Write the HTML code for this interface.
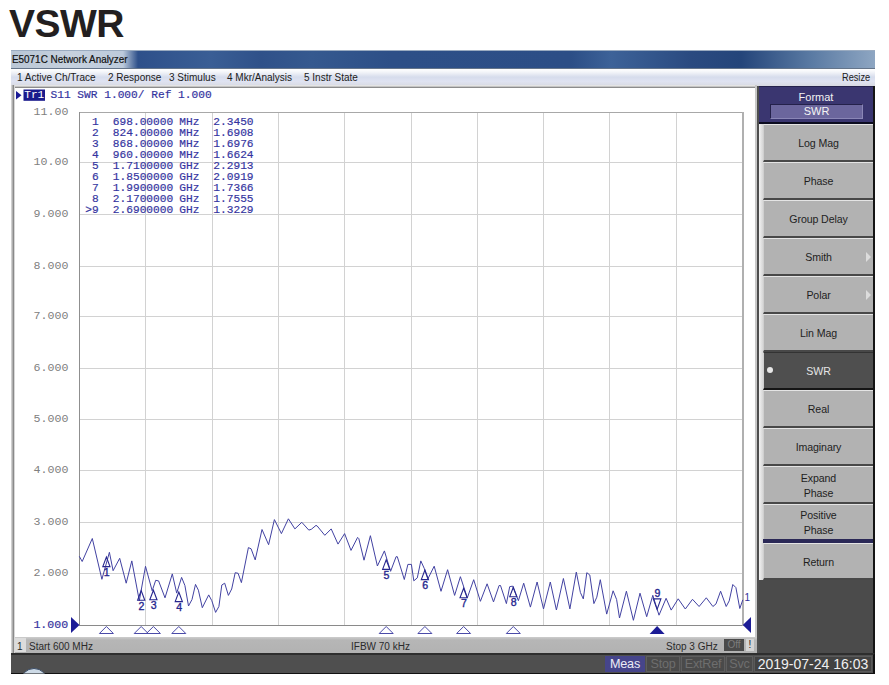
<!DOCTYPE html>
<html><head><meta charset="utf-8">
<style>
*{margin:0;padding:0;box-sizing:border-box}
html,body{width:889px;height:685px;overflow:hidden;background:#fff;font-family:"Liberation Sans",sans-serif;position:relative}
.a{position:absolute}
#h1{left:9px;top:1px;font-size:39px;font-weight:bold;color:#231f20;letter-spacing:-0.5px;line-height:46px}
#win{left:11px;top:50px;width:864px;height:624px;background:#505050}
#title{left:11px;top:50px;width:864px;height:19px;border-bottom:1px solid #65758a;background:linear-gradient(90deg,#b9c6d5 0px,#c6d1de 60px,#bccadb 112px,#2e508a 127px,#3a5e95 200px,#2f5189 250px,#35598f 300px,#2d4f87 380px,#2c4e86 560px,#3d6298 600px,#2a4a80 680px,#24457a 730px,#5a7aa3 800px,#8ea6c2 864px);border-top:1px solid #9aabc0}
#title span{position:absolute;left:1px;top:2px;font-size:11px;color:#101010;-webkit-text-stroke:0.2px #101010;transform:scaleX(0.9);transform-origin:0 0;white-space:nowrap}
#menu{left:11px;top:69px;width:864px;height:17px;background:linear-gradient(180deg,#ffffff 0%,#f3f5f9 18%,#d6dcec 48%,#dfe3f2 72%,#d8dae2 100%)}
#menu span{position:absolute;top:3px;font-size:10px;color:#202020;white-space:nowrap}
#chart{left:11px;top:85px;width:746px;height:552px;background:linear-gradient(180deg,#e4e4e4 0,#e4e4e4 1px,#c4c4c4 1px,#c4c4c4 2px,#8c8c8c 2px,#8c8c8c 3px,#fff 3px);border-right:2px solid #c8c8c8}
#lb{left:11px;top:85px;width:4px;height:568px;background:linear-gradient(90deg,#d0d0d0 0,#d0d0d0 1px,#b0b0b0 1px,#b0b0b0 2px,#8a8a8a 2px,#8a8a8a 3px,#d8d8d8 3px)}
#status{left:12px;top:637px;width:745px;height:16px;background:linear-gradient(180deg,#cdcdcd 0,#b6b6b6 3px,#b2b2b2 100%)}
#status span{position:absolute;top:4px;font-size:10px;color:#2a2a2a;white-space:nowrap}
#bottom{left:11px;top:653px;width:864px;height:21px;background:#4f4f4f;border-top:2px solid #2e2e2e;border-bottom:1px solid #111;border-right:2px solid #111}
#soft{left:757px;top:86px;width:118px;height:567px;background:#4b4b4b;border-left:2px solid #4e4e4e;border-right:2px solid #151515}
#fmt{left:759px;top:86px;width:114px;height:38px;border-top:1px solid #25224d;background:#3a3670;border-bottom:2px solid #0c0c20}
#fmt .t{position:absolute;left:0;width:114px;top:4px;text-align:center;color:#f2f2f2;font-size:11px}
#fmt .b{position:absolute;left:11px;top:17px;width:93px;height:15px;background:#6b669d;border-top:1px solid #24214a;border-left:1px solid #24214a;border-right:1px solid #8a86b6;border-bottom:1px solid #8a86b6;text-align:center;color:#f4f4f4;font-size:11px;line-height:13px}
#scr{left:759px;top:124px;width:4px;height:456px;background:linear-gradient(90deg,#f2f2f2,#d6d6d6)}
.btn{position:absolute;left:763px;width:110px;height:38px;background:#b2b2b2;border-top:1px solid #e4e4e4;border-left:1px solid #cfcfcf;border-bottom:2px solid #484848;color:#1e1e1e;font-size:10.6px;letter-spacing:-0.1px;text-align:center;display:flex;align-items:center;justify-content:center;line-height:15px;padding-top:2px}
.btn.sel{background:#4f4f4f;color:#e6e6e6;border-top:1px solid #333;border-bottom:2px solid #151515}
.arr{position:absolute;right:2px;top:13px;width:0;height:0;border-top:5px solid transparent;border-bottom:5px solid transparent;border-left:5px solid #dcdcdc}
.dot{position:absolute;left:3px;top:14px;width:6px;height:6px;border-radius:3px;background:#e8e8e8}
.bb{position:absolute;top:656px;height:16px;font-size:12.6px;letter-spacing:-0.2px;line-height:15px;text-align:center;color:#6e6e6e;border:1px solid #5e5e5e;background:#4a4a4a}
.mono{font-family:"Liberation Mono",monospace;font-size:11.2px;stroke-width:0.18px}
.mk{font-family:"Liberation Sans",sans-serif;font-size:10.6px;stroke-width:0.35px}
svg{position:absolute;left:0;top:0}
</style></head><body>
<div class="a" id="h1">VSWR</div>
<div class="a" id="win"></div>
<div class="a" id="title"><span>E5071C Network Analyzer</span></div>
<div class="a" id="menu">
<span style="left:6px">1 Active Ch/Trace</span>
<span style="left:97px">2 Response</span>
<span style="left:158px">3 Stimulus</span>
<span style="left:216px">4 Mkr/Analysis</span>
<span style="left:293px">5 Instr State</span>
<span style="left:831px;transform:scaleX(0.92);transform-origin:0 0">Resize</span>
</div>
<div class="a" id="chart"></div>
<div class="a" id="status">
<div class="a" style="left:1px;top:1px;width:13px;height:14px;background:#dcdcdc"></div>
<span style="left:5px">1</span>
<span style="left:17px">Start 600 MHz</span>
<span style="left:339px">IFBW 70 kHz</span>
<span style="left:654px">Stop 3 GHz</span>
<div class="a" style="left:712px;top:2px;width:20px;height:12px;background:#4a4a4a;color:#7c7c7c;font-size:10px;line-height:12px;text-align:center">Off</div>
<div class="a" style="left:734px;top:2px;width:8px;height:12px;background:#d4d4d4;color:#222;font-size:10px;line-height:12px;text-align:center">!</div>
</div>
<div class="a" id="lb"></div>
<div class="a" id="bottom"></div>
<div class="a" id="soft"></div>
<div class="a" id="fmt"><div class="t">Format</div><div class="b">SWR</div></div>
<div class="a" id="scr"></div>
<div class="btn" style="top:124px">Log Mag</div>
<div class="btn" style="top:162px">Phase</div>
<div class="btn" style="top:200px">Group Delay</div>
<div class="btn" style="top:238px">Smith<div class="arr"></div></div>
<div class="btn" style="top:276px">Polar<div class="arr"></div></div>
<div class="btn" style="top:314px">Lin Mag</div>
<div class="btn sel" style="top:352px"><div class="dot"></div>SWR</div>
<div class="btn" style="top:390px">Real</div>
<div class="btn" style="top:428px">Imaginary</div>
<div class="btn" style="top:466px">Expand<br>Phase</div>
<div class="btn" style="top:504px;height:35px;border-bottom:0">Positive<br>Phase</div>
<div class="a" style="left:763px;top:539px;width:110px;height:4px;background:#2a2856"></div>
<div class="btn" style="top:543px;height:37px">Return</div>
<div class="bb" style="left:605px;width:40px;background:#46458b;color:#ececf6;border-color:#46458b">Meas</div>
<div class="bb" style="left:646px;width:34px">Stop</div>
<div class="bb" style="left:681px;width:44px">ExtRef</div>
<div class="bb" style="left:726px;width:27px">Svc</div>
<div class="bb" style="left:754px;width:118px;color:#f0f0f0;background:#424242;border-color:#5a5a5a;font-size:14px;letter-spacing:0">2019-07-24 16:03</div>
<div class="a" style="left:20px;top:668px;width:28px;height:28px;border-radius:14px;background:#cddae6;border:1px solid #3a4c66;clip-path:inset(0 0 22.5px 0)"></div>
<svg width="889" height="685" viewBox="0 0 889 685">
<rect x="145" y="113" width="1" height="512" fill="#d2d2d2"/>
<rect x="212" y="113" width="1" height="512" fill="#d2d2d2"/>
<rect x="278" y="113" width="1" height="512" fill="#d2d2d2"/>
<rect x="344" y="113" width="1" height="512" fill="#d2d2d2"/>
<rect x="411" y="113" width="1" height="512" fill="#d2d2d2"/>
<rect x="477" y="113" width="1" height="512" fill="#d2d2d2"/>
<rect x="543" y="113" width="1" height="512" fill="#d2d2d2"/>
<rect x="609" y="113" width="1" height="512" fill="#d2d2d2"/>
<rect x="676" y="113" width="1" height="512" fill="#d2d2d2"/>
<rect x="80" y="162" width="662" height="1" fill="#d2d2d2"/>
<rect x="80" y="214" width="662" height="1" fill="#d2d2d2"/>
<rect x="80" y="266" width="662" height="1" fill="#d2d2d2"/>
<rect x="80" y="316" width="662" height="1" fill="#d2d2d2"/>
<rect x="80" y="368" width="662" height="1" fill="#d2d2d2"/>
<rect x="80" y="419" width="662" height="1" fill="#d2d2d2"/>
<rect x="80" y="470" width="662" height="1" fill="#d2d2d2"/>
<rect x="80" y="522" width="662" height="1" fill="#d2d2d2"/>
<rect x="80" y="573" width="662" height="1" fill="#d2d2d2"/>
<rect x="79" y="112" width="664" height="1" fill="#a8a8a8"/>
<rect x="79" y="625" width="664" height="1" fill="#8a8a8a"/>
<rect x="79" y="112" width="1" height="514" fill="#8f8f8f"/>
<rect x="742" y="112" width="2" height="514" fill="#b0b0b0"/>
<text x="68.4" y="114.9" text-anchor="end" class="mono" style="font-size:11.6px" fill="#808080">11.00</text>
<text x="68.4" y="164.9" text-anchor="end" class="mono" style="font-size:11.6px" fill="#808080">10.00</text>
<text x="68.4" y="216.9" text-anchor="end" class="mono" style="font-size:11.6px" fill="#808080">9.000</text>
<text x="68.4" y="268.9" text-anchor="end" class="mono" style="font-size:11.6px" fill="#808080">8.000</text>
<text x="68.4" y="318.9" text-anchor="end" class="mono" style="font-size:11.6px" fill="#808080">7.000</text>
<text x="68.4" y="370.9" text-anchor="end" class="mono" style="font-size:11.6px" fill="#808080">6.000</text>
<text x="68.4" y="421.9" text-anchor="end" class="mono" style="font-size:11.6px" fill="#808080">5.000</text>
<text x="68.4" y="472.9" text-anchor="end" class="mono" style="font-size:11.6px" fill="#808080">4.000</text>
<text x="68.4" y="524.9" text-anchor="end" class="mono" style="font-size:11.6px" fill="#808080">3.000</text>
<text x="68.4" y="575.9" text-anchor="end" class="mono" style="font-size:11.6px" fill="#808080">2.000</text>
<text x="68.2" y="627.9" text-anchor="end" class="mono" style="font-size:11.6px" fill="#34349e" stroke="#34349e">1.000</text>
<path d="M79.3,556.3 L82.2,561.5 L92.3,538.5 L101.9,579.3 L109.4,552.3 L113.1,570.7 L119.7,558.3 L126.2,583.2 L131.8,560.9 L139.3,600.7 L145.5,566.3 L152.2,590.8 L155.7,580.3 L158.6,580.9 L165.0,597.8 L172.3,573.9 L176.7,593.1 L181.6,577.4 L184.9,585.5 L188.5,606.0 L192.0,599.5 L195.5,584.4 L198.4,590.2 L202.3,607.7 L208.7,594.9 L211.8,600.7 L215.6,612.4 L218.9,606.5 L221.8,585.0 L224.7,583.2 L228.4,595.4 L231.7,589.0 L235.2,572.7 L238.1,573.3 L241.4,582.6 L248.4,547.6 L251.1,548.8 L255.2,559.9 L262.0,529.5 L268.6,544.7 L274.4,519.6 L281.4,533.6 L288.4,518.8 L294.9,528.9 L301.8,522.3 L308.8,530.1 L311.3,529.3 L316.0,525.4 L317.2,526.0 L324.8,535.3 L331.2,528.9 L338.0,544.1 L344.6,533.6 L351.0,550.4 L357.6,537.4 L358.8,538.6 L364.0,560.2 L370.4,535.7 L377.4,566.0 L384.4,550.9 L390.6,571.3 L396.1,556.7 L397.3,556.7 L404.3,579.5 L407.9,564.4 L411.4,564.4 L413.8,580.8 L417.3,577.9 L420.8,560.9 L424.3,568.5 L427.8,579.0 L434.2,566.2 L441.0,591.3 L447.6,569.7 L454.6,595.4 L460.4,576.7 L467.3,597.8 L473.7,579.7 L480.4,601.3 L487.1,583.8 L493.5,601.9 L499.1,585.5 L500.5,585.5 L506.4,603.6 L509.7,586.7 L512.6,586.1 L518.4,600.7 L523.7,583.2 L530.4,607.1 L537.1,582.0 L543.5,608.9 L550.3,582.0 L556.4,610.0 L563.4,578.5 L569.9,608.9 L576.3,572.1 L580.4,592.5 L583.3,598.9 L586.8,572.7 L589.8,575.0 L593.9,603.6 L596.8,597.2 L600.3,579.7 L606.7,614.1 L613.1,590.8 L616.6,599.5 L619.5,618.0 L626.4,591.2 L633.4,620.3 L640.0,593.2 L646.7,616.7 L652.8,595.3 L659.0,615.2 L666.1,598.3 L671.2,610.1 L678.2,598.8 L685.3,609.0 L692.5,599.3 L699.1,606.5 L706.3,597.8 L712.9,606.5 L716.0,603.9 L720.6,591.2 L726.2,606.5 L729.2,600.9 L732.8,584.5 L735.9,587.6 L739.8,608.5 L742.8,599.8" fill="none" stroke="#4242a2" stroke-width="1.0" stroke-linejoin="miter"/>
<path d="M106.4,557.0 L110.0,566.6 L102.8,566.6 Z" fill="none" stroke="#26268e" stroke-width="1.1"/>
<text x="106.7" y="576.2" text-anchor="middle" class="mk" fill="#26268e" stroke="#26268e">1</text>
<path d="M141.2,590.6 L144.8,600.2 L137.6,600.2 Z" fill="none" stroke="#26268e" stroke-width="1.1"/>
<text x="141.5" y="609.8" text-anchor="middle" class="mk" fill="#26268e" stroke="#26268e">2</text>
<path d="M153.4,590.2 L157.0,599.8 L149.8,599.8 Z" fill="none" stroke="#26268e" stroke-width="1.1"/>
<text x="153.7" y="609.4" text-anchor="middle" class="mk" fill="#26268e" stroke="#26268e">3</text>
<path d="M178.8,592.0 L182.4,601.6 L175.2,601.6 Z" fill="none" stroke="#26268e" stroke-width="1.1"/>
<text x="179.1" y="611.2" text-anchor="middle" class="mk" fill="#26268e" stroke="#26268e">4</text>
<path d="M386.2,559.8 L389.8,569.4 L382.6,569.4 Z" fill="none" stroke="#26268e" stroke-width="1.1"/>
<text x="386.5" y="579.0" text-anchor="middle" class="mk" fill="#26268e" stroke="#26268e">5</text>
<path d="M424.9,570.0 L428.5,579.6 L421.3,579.6 Z" fill="none" stroke="#26268e" stroke-width="1.1"/>
<text x="425.2" y="589.2" text-anchor="middle" class="mk" fill="#26268e" stroke="#26268e">6</text>
<path d="M463.6,588.2 L467.2,597.8 L460.0,597.8 Z" fill="none" stroke="#26268e" stroke-width="1.1"/>
<text x="463.9" y="607.4" text-anchor="middle" class="mk" fill="#26268e" stroke="#26268e">7</text>
<path d="M513.3,587.2 L516.9,596.8 L509.7,596.8 Z" fill="none" stroke="#26268e" stroke-width="1.1"/>
<text x="513.6" y="606.4" text-anchor="middle" class="mk" fill="#26268e" stroke="#26268e">8</text>
<path d="M653.3,598.9 L660.9,598.9 L657.1,609.4 Z" fill="none" stroke="#26268e" stroke-width="1.1"/>
<text x="657.4" y="596.8" text-anchor="middle" class="mk" fill="#26268e" stroke="#26268e">9</text>
<path d="M106.4,626.5 L113.4,633.5 L99.4,633.5 Z" fill="none" stroke="#4a4aa8" stroke-width="1"/>
<path d="M141.2,626.5 L148.2,633.5 L134.2,633.5 Z" fill="none" stroke="#4a4aa8" stroke-width="1"/>
<path d="M153.4,626.5 L160.4,633.5 L146.4,633.5 Z" fill="none" stroke="#4a4aa8" stroke-width="1"/>
<path d="M178.8,626.5 L185.8,633.5 L171.8,633.5 Z" fill="none" stroke="#4a4aa8" stroke-width="1"/>
<path d="M386.2,626.5 L393.2,633.5 L379.2,633.5 Z" fill="none" stroke="#4a4aa8" stroke-width="1"/>
<path d="M424.9,626.5 L431.9,633.5 L417.9,633.5 Z" fill="none" stroke="#4a4aa8" stroke-width="1"/>
<path d="M463.6,626.5 L470.6,633.5 L456.6,633.5 Z" fill="none" stroke="#4a4aa8" stroke-width="1"/>
<path d="M513.3,626.5 L520.3,633.5 L506.3,633.5 Z" fill="none" stroke="#4a4aa8" stroke-width="1"/>
<path d="M657.1,626 L664.6,634 L649.6,634 Z" fill="#1c1c96"/>
<path d="M71,617 L79.5,625 L71,633 Z" fill="#1c1c96"/>
<path d="M751,617 L742.8,625 L751,633 Z" fill="#1c1c96"/>
<text x="744.5" y="600.5" font-family="Liberation Sans" font-size="10px" fill="#30309a">1</text>
<path d="M16,91 L21.5,95.3 L16,99.6 Z" fill="#1c1c96"/>
<rect x="23.5" y="89.5" width="21.5" height="11.3" fill="#1a1a8c"/>
<text x="24.2" y="98.3" class="mono" fill="#ffffff">Tr1</text>
<text x="50.5" y="98.2" class="mono" fill="#3434a0" stroke="#3434a0">S11 SWR 1.000/ Ref 1.000</text>
<text y="125.1" class="mono" fill="#3434a0" stroke="#3434a0" xml:space="preserve"><tspan x="85.2"> 1</tspan><tspan x="112.8">698.00000</tspan><tspan x="179.3">MHz</tspan><tspan x="213.3">2.3450</tspan></text>
<text y="136.0" class="mono" fill="#3434a0" stroke="#3434a0" xml:space="preserve"><tspan x="85.2"> 2</tspan><tspan x="112.8">824.00000</tspan><tspan x="179.3">MHz</tspan><tspan x="213.3">1.6908</tspan></text>
<text y="147.0" class="mono" fill="#3434a0" stroke="#3434a0" xml:space="preserve"><tspan x="85.2"> 3</tspan><tspan x="112.8">868.00000</tspan><tspan x="179.3">MHz</tspan><tspan x="213.3">1.6976</tspan></text>
<text y="157.9" class="mono" fill="#3434a0" stroke="#3434a0" xml:space="preserve"><tspan x="85.2"> 4</tspan><tspan x="112.8">960.00000</tspan><tspan x="179.3">MHz</tspan><tspan x="213.3">1.6624</tspan></text>
<text y="168.9" class="mono" fill="#3434a0" stroke="#3434a0" xml:space="preserve"><tspan x="85.2"> 5</tspan><tspan x="112.8">1.7100000</tspan><tspan x="179.3">GHz</tspan><tspan x="213.3">2.2913</tspan></text>
<text y="179.8" class="mono" fill="#3434a0" stroke="#3434a0" xml:space="preserve"><tspan x="85.2"> 6</tspan><tspan x="112.8">1.8500000</tspan><tspan x="179.3">GHz</tspan><tspan x="213.3">2.0919</tspan></text>
<text y="190.8" class="mono" fill="#3434a0" stroke="#3434a0" xml:space="preserve"><tspan x="85.2"> 7</tspan><tspan x="112.8">1.9900000</tspan><tspan x="179.3">GHz</tspan><tspan x="213.3">1.7366</tspan></text>
<text y="201.8" class="mono" fill="#3434a0" stroke="#3434a0" xml:space="preserve"><tspan x="85.2"> 8</tspan><tspan x="112.8">2.1700000</tspan><tspan x="179.3">GHz</tspan><tspan x="213.3">1.7555</tspan></text>
<text y="212.7" class="mono" fill="#3434a0" stroke="#3434a0" xml:space="preserve"><tspan x="85.2">>9</tspan><tspan x="112.8">2.6900000</tspan><tspan x="179.3">GHz</tspan><tspan x="213.3">1.3229</tspan></text>
</svg>
</body></html>
